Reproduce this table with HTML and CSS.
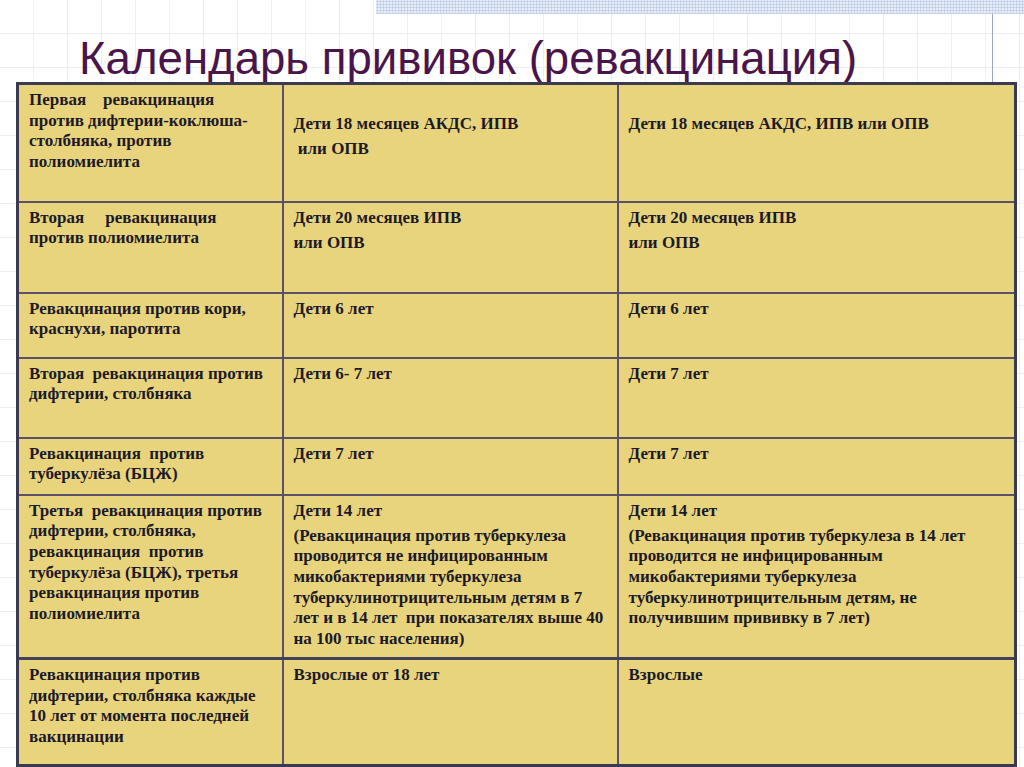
FILE: index.html
```html
<!DOCTYPE html>
<html lang="ru">
<head>
<meta charset="utf-8">
<title>Календарь прививок (ревакцинация)</title>
<link rel="stylesheet" href="styles.css">
</head>
<body>
<div class="slide">
  <div class="band"></div>
  <h1 class="title">Календарь прививок (ревакцинация)</h1>
  <table class="grid">
    <colgroup><col class="c1"><col class="c2"><col class="c3"></colgroup>
    <tr class="r1">
      <td><p class="t">Первая    ревакцинация<br>против дифтерии-коклюша-<br>столбняка, против<br>полиомиелита</p></td>
      <td><p class="t low">Дети 18 месяцев АКДС, ИПВ</p><p class="t"> или ОПВ</p></td>
      <td><p class="t low">Дети 18 месяцев АКДС, ИПВ или ОПВ</p></td>
    </tr>
    <tr class="r2">
      <td><p class="t">Вторая     ревакцинация<br>против полиомиелита</p></td>
      <td><p class="t">Дети 20 месяцев ИПВ</p><p class="t">или ОПВ</p></td>
      <td><p class="t">Дети 20 месяцев ИПВ</p><p class="t">или ОПВ</p></td>
    </tr>
    <tr class="r3">
      <td><p class="t">Ревакцинация против кори,<br>краснухи, паротита</p></td>
      <td><p class="t">Дети 6 лет</p></td>
      <td><p class="t">Дети 6 лет</p></td>
    </tr>
    <tr class="r4">
      <td><p class="t">Вторая  ревакцинация против<br>дифтерии, столбняка</p></td>
      <td><p class="t">Дети 6- 7 лет</p></td>
      <td><p class="t">Дети 7 лет</p></td>
    </tr>
    <tr class="r5">
      <td><p class="t">Ревакцинация  против<br>туберкулёза (БЦЖ)</p></td>
      <td><p class="t">Дети 7 лет</p></td>
      <td><p class="t">Дети 7 лет</p></td>
    </tr>
    <tr class="r6">
      <td><p class="t">Третья  ревакцинация против<br>дифтерии, столбняка,<br>ревакцинация  против<br>туберкулёза (БЦЖ), третья<br>ревакцинация против<br>полиомиелита</p></td>
      <td><p class="t">Дети 14 лет</p><p class="t">(Ревакцинация против туберкулеза<br>проводится не инфицированным<br>микобактериями туберкулеза<br>туберкулинотрицительным детям в 7<br>лет и в 14 лет  при показателях выше 40<br>на 100 тыс населения)</p></td>
      <td><p class="t">Дети 14 лет</p><p class="t">(Ревакцинация против туберкулеза в 14 лет<br>проводится не инфицированным<br>микобактериями туберкулеза<br>туберкулинотрицительным детям, не<br>получившим прививку в 7 лет)</p></td>
    </tr>
    <tr class="r7">
      <td><p class="t">Ревакцинация против<br>дифтерии, столбняка каждые<br>10 лет от момента последней<br>вакцинации</p></td>
      <td><p class="t">Взрослые от 18 лет</p></td>
      <td><p class="t">Взрослые</p></td>
    </tr>
  </table>
</div>
</body>
</html>
```
FILE: styles.css
```css
html, body {
  margin: 0;
  padding: 0;
}
body {
  width: 1024px;
  height: 767px;
  overflow: hidden;
  background-color: #ffffff;
}
.slide {
  width: 1024px;
  height: 767px;
  background-image:
    linear-gradient(#9ea6bf, #9ea6bf),
    repeating-linear-gradient(to right, transparent 0, transparent 33px, #eceef3 33px, #eceef3 34px),
    repeating-linear-gradient(to bottom, transparent 0, transparent 33px, #eceef3 33px, #eceef3 34px);
  background-size: 1px 84px, 100% 100%, 100% 100%;
  background-position: 992px 0, 0 0, 0 0;
  background-repeat: no-repeat, no-repeat, no-repeat;
  display: flex;
  flex-direction: column;
}
.band {
  height: 15px;
  margin-left: 376px;
  background-color: #e6ecf8;
  background-image: radial-gradient(circle, #bccae6 0.9px, transparent 1.2px);
  background-size: 3px 3px;
}
.title {
  margin: 22px 0 0 0;
  padding-left: 79px;
  height: 45px;
  font-family: "Liberation Sans", Arial, sans-serif;
  font-weight: normal;
  font-size: 45.6px;
  line-height: 45px;
  color: #4a154a;
  letter-spacing: 0;
  white-space: nowrap;
}
.grid {
  margin: 1px 0 0 16px;
  width: 998px;
  table-layout: fixed;
  border-collapse: collapse;
  background: #e9d47e;
  border: 3px solid #3a3a52;
}
.c1 { width: 265px; }
.c2 { width: 335px; }
.c3 { width: 398px; }
.grid td {
  border: 2px solid #5c5268;
  vertical-align: top;
  padding: 5px 10px 0 10px;
}
.grid td:first-child { border-left: 3px solid #3a3a52; padding-left: 10px; }
.grid td:last-child { border-right: 3px solid #3a3a52; }
.r1 td { border-top: 3px solid #3a3a52; }
.r7 td { border-top: 3px solid #434258; border-bottom: 3px solid #3a3a52; }
.r1 { height: 118px; }
.r2 { height: 91px; }
.r3 { height: 65px; }
.r4 { height: 80px; }
.r5 { height: 57px; }
.r6 { height: 164px; }
.r7 { height: 107px; }
.t {
  margin: 0 0 4.3px 0;
  font-family: "Liberation Serif", "Times New Roman", serif;
  font-weight: bold;
  font-size: 17px;
  line-height: 20.7px;
  color: #1c1a26;
  white-space: pre;
}
.t.low { margin-top: 24px; }
```
